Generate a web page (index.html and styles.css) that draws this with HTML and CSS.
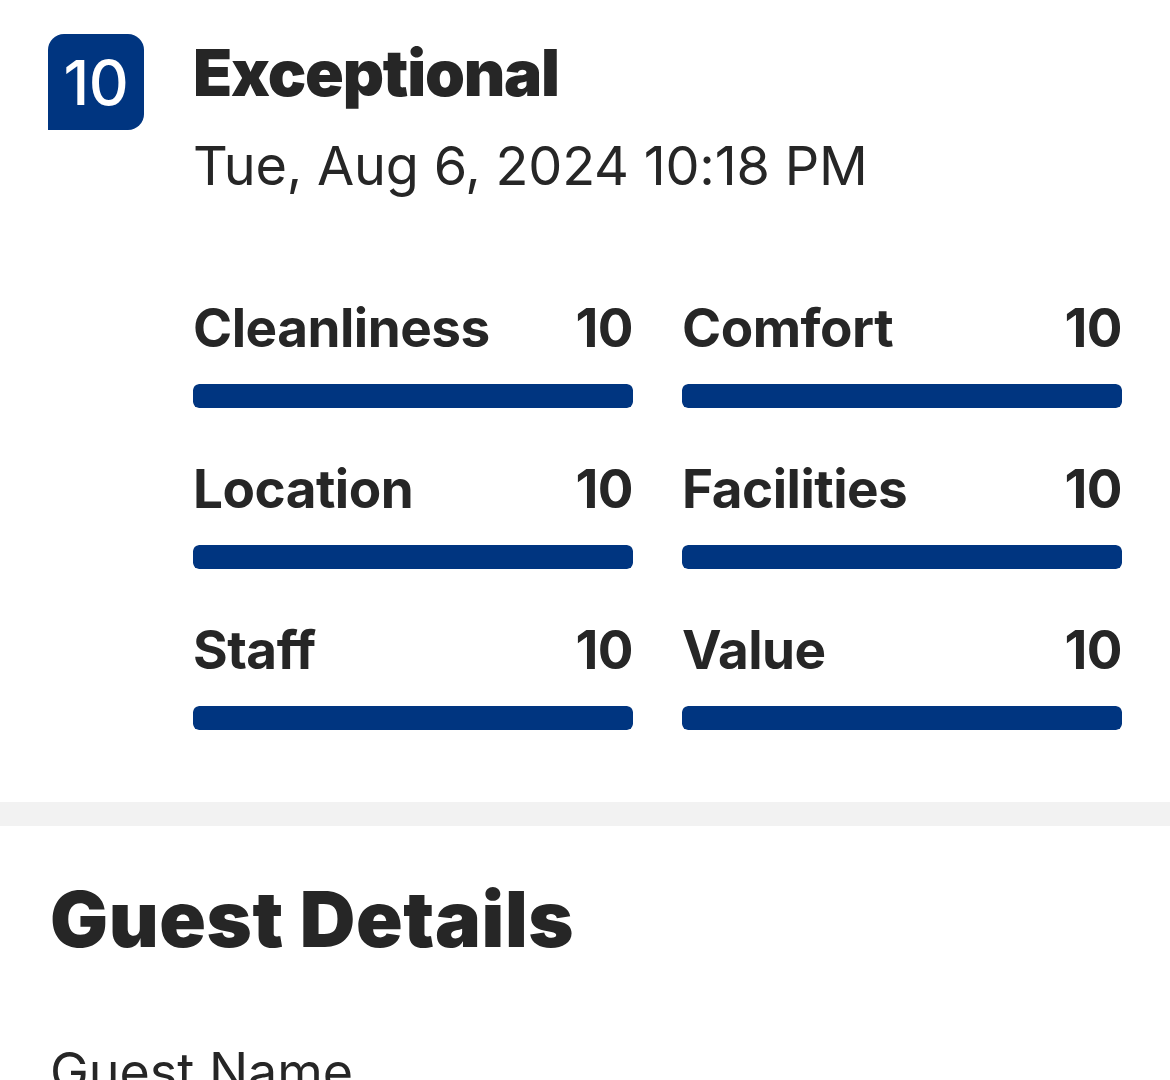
FILE: index.html
```html
<!DOCTYPE html>
<html>
<head>
<meta charset="utf-8">
<link rel="stylesheet" href="styles.css">
</head>
<body>
<section class="review">
  <div class="head">
    <div class="badge">10</div>
    <div class="head-text">
      <div class="title">Exceptional</div>
      <div class="date">Tue, Aug 6, 2024 10:18 PM</div>
    </div>
  </div>
  <div class="scores">
    <div class="score"><div class="row"><span>Cleanliness</span><span>10</span></div><div class="bar"><div class="fill" style="width:100%"></div></div></div>
    <div class="score"><div class="row"><span>Comfort</span><span>10</span></div><div class="bar"><div class="fill" style="width:100%"></div></div></div>
    <div class="score"><div class="row"><span>Location</span><span>10</span></div><div class="bar"><div class="fill" style="width:100%"></div></div></div>
    <div class="score"><div class="row"><span>Facilities</span><span>10</span></div><div class="bar"><div class="fill" style="width:100%"></div></div></div>
    <div class="score"><div class="row"><span>Staff</span><span>10</span></div><div class="bar"><div class="fill" style="width:100%"></div></div></div>
    <div class="score"><div class="row"><span>Value</span><span>10</span></div><div class="bar"><div class="fill" style="width:100%"></div></div></div>
  </div>
</section>
<div class="divider"></div>
<section class="guest">
  <h2 class="guest-title">Guest Details</h2>
  <div class="field-label">Guest Name</div>
</section>
</body>
</html>
```
FILE: styles.css
```css
html, body {
  margin: 0;
  padding: 0;
  background: #fff;
  color: #262626;
  font-family: Inter, "Noto Sans", "Liberation Sans", sans-serif;
}
.review {
  padding: 34px 48px 72px 48px;
}
.head {
  display: flex;
  gap: 49px;
}
.badge {
  width: 96px;
  height: 96px;
  flex: none;
  background: #003580;
  color: #fff;
  border-radius: 16px 16px 16px 0;
  display: flex;
  align-items: center;
  justify-content: center;
  font-size: 62px;
  font-weight: 500;
  letter-spacing: -0.5px;
}
.head-text {
  display: flex;
  flex-direction: column;
}
.title {
  font-size: 64px;
  font-weight: 900;
  line-height: 78px;
  letter-spacing: -1.2px;
}
.date {
  font-size: 54px;
  font-weight: 400;
  line-height: 64px;
  margin-top: 22px;
  letter-spacing: -0.2px;
}
.scores {
  margin: 97px 0 0 145px;
  display: grid;
  grid-template-columns: 1fr 1fr;
  column-gap: 49px;
  row-gap: 48px;
}
.row {
  display: flex;
  justify-content: space-between;
  font-size: 53px;
  font-weight: 700;
  line-height: 66px;
  letter-spacing: -0.5px;
}
.bar {
  margin-top: 23px;
  height: 24px;
  border-radius: 6px;
  background: #e6e6e6;
  overflow: hidden;
}
.fill {
  height: 100%;
  background: #003580;
  border-radius: 6px;
}
.divider {
  height: 24px;
  background: #f2f2f2;
}
.guest {
  padding: 0 48px;
}
.guest-title {
  margin: 48px 0 0 2px;
  font-size: 77px;
  font-weight: 900;
  line-height: 90px;
  letter-spacing: 0.6px;
}
.field-label {
  margin-top: 76px;
  font-size: 52px;
  line-height: 64px;
  margin-left: 2px;
}
```
